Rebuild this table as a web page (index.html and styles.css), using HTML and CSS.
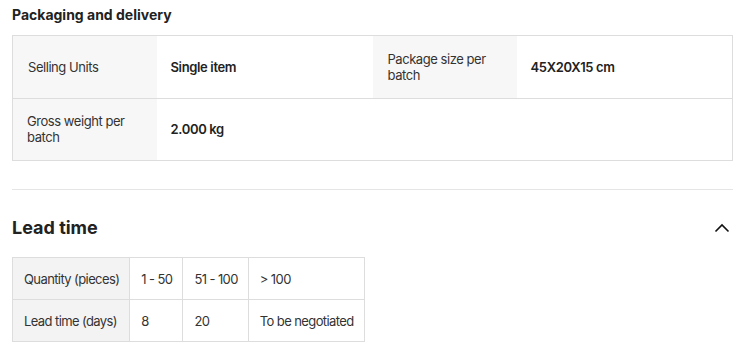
FILE: index.html
```html
<html>

<head>
    <link rel="stylesheet" href="styles.css">
</head>

<body>
    <div class="page">
        <h3 class="title">Packaging and delivery</h3>
        <table class="attrs">
            <colgroup>
                <col class="col-label">
                <col class="col-value">
                <col class="col-label">
                <col class="col-value">
            </colgroup>
            <tr>
                <td class="label">Selling Units</td>
                <td class="value">Single item</td>
                <td class="label">Package size per batch</td>
                <td class="value">45X20X15 cm</td>
            </tr>
            <tr>
                <td class="label">Gross weight per batch</td>
                <td class="value">2.000 kg</td>
                <td colspan="2"></td>
            </tr>
        </table>

        <div class="divider"></div>

        <div class="section-head">
            <h2>Lead time</h2>
            <svg class="chevron" width="16" height="10" viewBox="0 0 16 10">
                <path d="M1.5 8.5 L8 2 L14.5 8.5" fill="none" stroke="#111" stroke-width="1.6" />
            </svg>
        </div>
        <table class="lead">
            <tr>
                <th>Quantity (pieces)</th>
                <td>1 - 50</td>
                <td>51 - 100</td>
                <td>&gt; 100</td>
            </tr>
            <tr>
                <th>Lead time (days)</th>
                <td>8</td>
                <td>20</td>
                <td>To be negotiated</td>
            </tr>
        </table>
    </div>
</body>

</html>
```

FILE: styles.css
```css
body {
    margin: 0;
    font-family: Inter, "Noto Sans", sans-serif;
    color: #222;
    background: #fff;
}

.page {
    padding: 6px 15px 0 12px;
}

.title {
    margin: 0;
    font-size: 14px;
    font-weight: 700;
    line-height: 17px;
    color: #222;
}

.attrs {
    width: 100%;
    margin-top: 12px;
    border: 1px solid #ddd;
    border-collapse: collapse;
    table-layout: fixed;
    font-size: 13px;
    line-height: 16px;
    letter-spacing: -0.45px;
}

.col-label {
    width: 20%;
}

.col-value {
    width: 30%;
}

.attrs tr {
    border-bottom: 1px solid #ddd;
}

.attrs td {
    height: 30px;
    padding: 15px 14px;
    vertical-align: middle;
}

.attrs tr:last-child td {
    height: 30px;
    padding: 14px 14px 15px;
}

.attrs .label {
    padding-left: 15px;
    background: #f7f7f7;
    color: #333;
}

.attrs .value {
    font-weight: 600;
    letter-spacing: -0.35px;
    color: #222;
}

.divider {
    margin-top: 28px;
    border-top: 1px solid #e5e5e5;
}

.section-head {
    display: flex;
    align-items: center;
    justify-content: space-between;
    margin-top: 27px;
}

.section-head h2 {
    margin: 0;
    font-size: 18px;
    font-weight: 700;
    line-height: 22px;
    color: #222;
}

.chevron {
    margin-right: 3px;
}

.lead {
    margin-top: 18px;
    border-collapse: collapse;
    font-size: 13px;
    line-height: 16px;
    letter-spacing: -0.6px;
    color: #333;
}

.lead th,
.lead td {
    height: 42px;
    padding: 0 10px 0 11px;
    border: 1px solid #ddd;
    text-align: left;
    font-weight: 400;
    white-space: nowrap;
}

.lead th {
    background: #f3f3f3;
}
```
